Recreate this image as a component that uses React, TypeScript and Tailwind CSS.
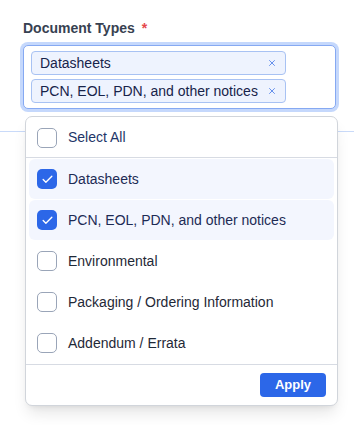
import { X, Check } from "lucide-react";

type Option = {
  label: string;
  checked: boolean;
};

const options: Option[] = [
  { label: "Datasheets", checked: true },
  { label: "PCN, EOL, PDN, and other notices", checked: true },
  { label: "Environmental", checked: false },
  { label: "Packaging / Ordering Information", checked: false },
  { label: "Addendum / Errata", checked: false },
];

function Box({ checked }: { checked: boolean }) {
  return checked ? (
    <span className="flex h-5 w-5 shrink-0 items-center justify-center rounded-[5px] bg-[#2c67e8]">
      <Check className="h-[13px] w-[13px] text-white" strokeWidth={2.5} />
    </span>
  ) : (
    <span className="h-5 w-5 shrink-0 rounded-[5px] border border-[#9aa5b8] bg-white" />
  );
}

export default function App() {
  const selected = options.filter((o) => o.checked);

  return (
    <div className="relative min-h-[425px] w-[354px] bg-white font-[family-name:Liberation_Sans,Arial,sans-serif]">
      {/* Field */}
      <div className="pl-[23px] pt-[20px]">
        <label className="flex items-center text-[14px] leading-[16px] font-bold text-[#374151]">
          Document Types
          <span className="ml-[7px] text-[#e5484d]">*</span>
        </label>
        <div className="mt-[9px] w-[313px] rounded-[5px] border border-[#86a9f2] bg-white py-[5px] pl-[7px] pr-[49px] shadow-[0_0_0_3px_#c5d8fc]">
          <div className="flex flex-col gap-[4px]">
            {selected.map((o) => (
              <div
                key={o.label}
                className="flex h-[24px] items-center justify-between rounded-[4px] border border-[#a8c2f3] bg-[#eef3fe] pl-[8px] pr-[8px] text-[14px] text-[#17234a]"
              >
                <span>{o.label}</span>
                <X className="h-[10px] w-[10px] text-[#4a7de8]" strokeWidth={2} />
              </div>
            ))}
          </div>
        </div>
      </div>

      {/* Element behind the menu */}
      <div className="absolute left-0 right-0 top-[131px] h-[1px] bg-[#c9daf9]" />

      {/* Dropdown */}
      <div className="absolute left-[25px] top-[116px] w-[313px] rounded-[7px] border border-[#d1d5db] bg-white shadow-[0_10px_15px_-3px_rgba(0,0,0,0.1),0_4px_6px_-4px_rgba(0,0,0,0.1)]">
        <div className="flex h-[41px] items-center gap-[11px] border-b border-[#d7dbe3] px-[11px] pt-[1px] text-[14px] text-[#1e3568]">
          <Box checked={false} />
          <span>Select All</span>
        </div>
        <div className="flex flex-col gap-[1px] px-[3px] py-[1px]">
          {options.map((o) => (
            <div
              key={o.label}
              className={
                o.checked
                  ? "flex h-[40px] items-center gap-[11px] rounded-[6px] bg-[#f3f6fe] px-[8px] text-[14px] text-[#1d2b55]"
                  : "flex h-[40px] items-center gap-[11px] rounded-[6px] px-[8px] text-[14px] text-[#1f2937]"
              }
            >
              <Box checked={o.checked} />
              <span>{o.label}</span>
            </div>
          ))}
        </div>
        <div className="flex justify-end border-t border-[#d7dbe3] px-[11px] py-[8px]">
          <button className="h-[24px] w-[66px] rounded-[4px] bg-[#2c67e8] text-[13px] font-bold text-white">
            Apply
          </button>
        </div>
      </div>
    </div>
  );
}
